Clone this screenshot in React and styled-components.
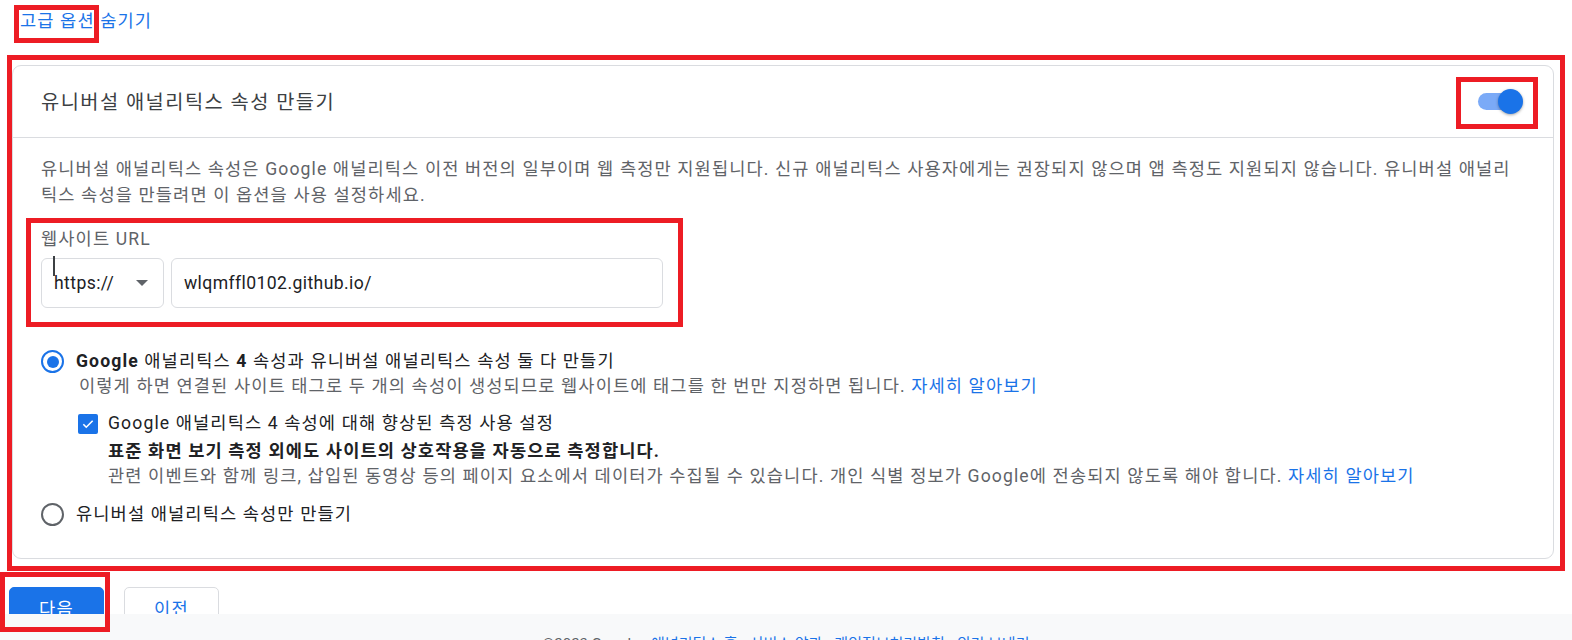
import React from 'react';
import styled, { createGlobalStyle } from 'styled-components';

const GlobalStyle = createGlobalStyle`
  body {
    margin: 0;
    background: #ffffff;
    font-family: Roboto, "Noto Sans CJK KR", sans-serif;
    color: #202124;
  }
`;

const Page = styled.div`
  padding: 0 18px 40px 9px;
  letter-spacing: 1.12px;
`;

const TopBar = styled.div`
  padding: 8px 0 0 11px;
  height: 26px;
`;

const LinkText = styled.a`
  display: inline-flex;
  font-size: 17.6px;
  line-height: 26px;
  color: #1a73e8;
  text-decoration: none;
  white-space: pre;
`;

const Marked = styled.span`
  position: relative;
  display: inline-block;
`;

const Highlight = styled.span`
  position: absolute;
  top: ${p => p.$t}px;
  left: ${p => p.$l}px;
  right: ${p => p.$r}px;
  bottom: ${p => p.$b}px;
  border: 5px solid #ed1c24;
  pointer-events: none;
  z-index: 20;
`;

const CardWrap = styled.div`
  position: relative;
  margin: 31px 0 0 3px;
`;

const Card = styled.div`
  border: 1px solid #dadce0;
  border-radius: 9px;
`;

const CardHeader = styled.div`
  height: 71px;
  display: flex;
  align-items: center;
  justify-content: space-between;
  padding: 0 30px 0 28px;
  border-bottom: 1px solid #dadce0;
`;

const Title = styled.div`
  font-size: 19.8px;
  letter-spacing: 1.45px;
  color: #3c4043;
  margin-top: -3px;
`;

const Switch = styled.div`
  position: relative;
  width: 45px;
  height: 25px;
`;

const Track = styled.div`
  position: absolute;
  left: 0;
  top: 4px;
  width: 40px;
  height: 17px;
  border-radius: 9px;
  background: #7baaf7;
`;

const Thumb = styled.div`
  position: absolute;
  right: 0;
  top: 0;
  width: 25px;
  height: 25px;
  border-radius: 50%;
  background: #1a73e8;
  box-shadow: 0 1px 3px rgba(0, 0, 0, 0.35);
`;

const CardBody = styled.div`
  padding: 18px 30px 31px 28px;
`;

const Description = styled.p`
  margin: 0;
  font-size: 17.6px;
  line-height: 26px;
  color: #5f6368;
`;

const UrlSection = styled.div`
  position: relative;
  margin-top: 20px;
  width: 622px;
`;

const FieldLabel = styled.div`
  font-size: 17.6px;
  line-height: 22px;
  color: #5f6368;
`;

const FieldRow = styled.div`
  display: flex;
  gap: 7px;
  margin-top: 8px;
`;

const Field = styled.div`
  position: relative;
  box-sizing: border-box;
  height: 50px;
  width: ${p => p.$w}px;
  border: 1px solid #dadce0;
  border-radius: 6px;
  display: flex;
  align-items: center;
  justify-content: space-between;
  padding: 0 15px 0 12px;
  font-size: 17.6px;
  letter-spacing: 0.4px;
  color: #202124;
`;

const Caret = styled.span`
  position: absolute;
  left: 11px;
  top: -3px;
  width: 2px;
  height: 20px;
  background: #3c4043;
`;

const Arrow = styled.span`
  width: 0;
  height: 0;
  border-left: 6.5px solid transparent;
  border-right: 6.5px solid transparent;
  border-top: 6px solid #5f6368;
`;

const Options = styled.div`
  margin-top: 41px;
  display: flex;
  flex-direction: column;
`;

const OptionRow = styled.div`
  display: flex;
  align-items: flex-start;
  gap: 12px;
  margin-top: ${p => p.$mt || 0}px;
`;

const Radio = styled.span`
  flex: none;
  box-sizing: border-box;
  width: 23px;
  height: 23px;
  border-radius: 50%;
  border: 2.3px solid ${p => (p.$on ? '#1a73e8' : '#5f6368')};
  display: flex;
  align-items: center;
  justify-content: center;
  margin-top: 1px;
  &::after {
    content: '';
    display: ${p => (p.$on ? 'block' : 'none')};
    width: 12px;
    height: 12px;
    border-radius: 50%;
    background: #1a73e8;
  }
`;

const OptionText = styled.div`
  display: flex;
  flex-direction: column;
`;

const OptionLabel = styled.div`
  font-size: 17.6px;
  line-height: 25px;
  color: #202124;
  b {
    font-weight: 700;
  }
`;

const Hint = styled.div`
  font-size: 17.6px;
  line-height: 25px;
  color: #5f6368;
  margin-left: ${p => p.$ml || 0}px;
`;

const Strong = styled.div`
  font-size: 17.6px;
  line-height: 26px;
  margin-top: 2px;
  font-weight: 700;
  color: #202124;
`;

const More = styled.a`
  color: #1a73e8;
  text-decoration: none;
`;

const SubOption = styled.div`
  display: flex;
  gap: 10px;
  margin: 12px 0 0 37px;
`;

const Checkbox = styled.span`
  flex: none;
  width: 20px;
  height: 20px;
  border-radius: 2px;
  background: #1a73e8;
  display: flex;
  align-items: center;
  justify-content: center;
  margin-top: 3px;
`;

const SubText = styled.div`
  display: flex;
  flex-direction: column;
`;

const Buttons = styled.div`
  display: flex;
  gap: 20px;
  margin-top: 28px;
`;

const ButtonWrap = styled.div`
  position: relative;
`;

const Button = styled.button`
  box-sizing: border-box;
  width: 95px;
  height: 40px;
  border-radius: 5px;
  font-family: inherit;
  font-size: 17.6px;
  letter-spacing: 1.2px;
  border: 1px solid ${p => (p.$primary ? '#1a73e8' : '#dadce0')};
  background: ${p => (p.$primary ? '#1a73e8' : '#ffffff')};
  color: ${p => (p.$primary ? '#ffffff' : '#1a73e8')};
  padding: 0;
`;

const Footer = styled.footer`
  position: fixed;
  left: 0;
  right: 0;
  bottom: 0;
  box-sizing: border-box;
  height: 26px;
  overflow: hidden;
  background: #f8f9fa;
  display: flex;
  justify-content: center;
  gap: 12px;
  padding-top: 19px;
  font-size: 15px;
  line-height: 22px;
  color: #5f6368;
  z-index: 10;
  a {
    color: #1a73e8;
    text-decoration: none;
  }
`;

const CheckIcon = () => (
  <svg width="14" height="14" viewBox="0 0 24 24" fill="none">
    <path d="M4 12.5l5 5L20 6.5" stroke="#fff" strokeWidth="2.8" />
  </svg>
);

export default function App() {
  return (
    <>
      <GlobalStyle />
      <Page>
        <TopBar>
          <LinkText href="#">
            <Marked>
              고급 옵션
              <Highlight $t={-3} $l={-6} $r={-4} $b={-9} />
            </Marked>
            {' 숨기기'}
          </LinkText>
        </TopBar>

        <CardWrap>
          <Card>
            <CardHeader>
              <Title>유니버설 애널리틱스 속성 만들기</Title>
              <Switch>
                <Track />
                <Thumb />
                <Highlight $t={-12} $l={-22} $r={-15} $b={-15} />
              </Switch>
            </CardHeader>
            <CardBody>
              <Description>
                유니버설 애널리틱스 속성은 Google 애널리틱스 이전 버전의 일부이며 웹 측정만 지원됩니다. 신규 애널리틱스 사용자에게는 권장되지 않으며 앱 측정도 지원되지 않습니다. 유니버설 애널리틱스 속성을 만들려면 이 옵션을 사용 설정하세요.
              </Description>

              <UrlSection>
                <FieldLabel>웹사이트 URL</FieldLabel>
                <FieldRow>
                  <Field $w={123}>
                    <Caret />
                    https://
                    <Arrow />
                  </Field>
                  <Field $w={492}>wlqmffl0102.github.io/</Field>
                </FieldRow>
                <Highlight $t={-10} $l={-15} $r={-20} $b={-19} />
              </UrlSection>

              <Options>
                <OptionRow>
                  <Radio $on />
                  <OptionText>
                    <OptionLabel>
                      <b>Google</b> 애널리틱스 <b>4</b> 속성과 유니버설 애널리틱스 속성 둘 다 만들기
                    </OptionLabel>
                    <Hint $ml={3}>
                      이렇게 하면 연결된 사이트 태그로 두 개의 속성이 생성되므로 웹사이트에 태그를 한 번만 지정하면 됩니다. <More href="#">자세히 알아보기</More>
                    </Hint>
                  </OptionText>
                </OptionRow>

                <SubOption>
                  <Checkbox>
                    <CheckIcon />
                  </Checkbox>
                  <SubText>
                    <OptionLabel>Google 애널리틱스 4 속성에 대해 향상된 측정 사용 설정</OptionLabel>
                    <Strong>표준 화면 보기 측정 외에도 사이트의 상호작용을 자동으로 측정합니다.</Strong>
                    <Hint>
                      관련 이벤트와 함께 링크, 삽입된 동영상 등의 페이지 요소에서 데이터가 수집될 수 있습니다. 개인 식별 정보가 Google에 전송되지 않도록 해야 합니다. <More href="#">자세히 알아보기</More>
                    </Hint>
                  </SubText>
                </SubOption>

                <OptionRow $mt={13}>
                  <Radio />
                  <OptionLabel>유니버설 애널리틱스 속성만 만들기</OptionLabel>
                </OptionRow>
              </Options>
            </CardBody>
          </Card>
          <Highlight $t={-10} $l={-5} $r={-11} $b={-12} />
        </CardWrap>

        <Buttons>
          <ButtonWrap>
            <Button $primary>다음</Button>
            <Highlight $t={-15} $l={-9} $r={-6} $b={-5} />
          </ButtonWrap>
          <ButtonWrap>
            <Button>이전</Button>
          </ButtonWrap>
        </Buttons>
      </Page>

      <Footer>
        <span>©2023 Google</span>
        <a href="#">애널리틱스 홈</a>
        <a href="#">서비스 약관</a>
        <a href="#">개인정보처리방침</a>
        <a href="#">의견 보내기</a>
      </Footer>
    </>
  );
}
